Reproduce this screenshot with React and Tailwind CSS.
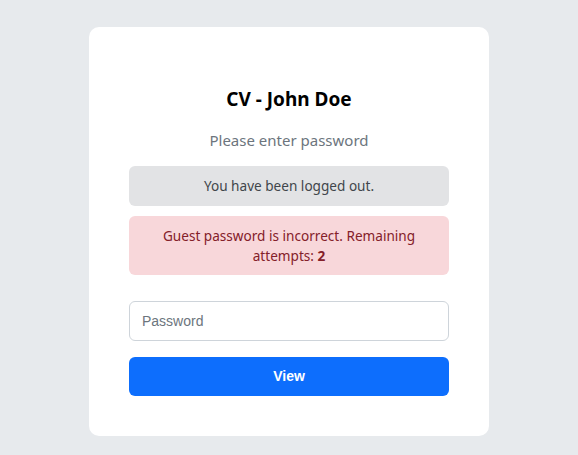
export default function App() {
  return (
    <div className="min-h-[455px] bg-[#e7eaed] pt-[27px] flex justify-center" style={{ fontFamily: '"Noto Sans", "Open Sans", sans-serif' }}>
      <div className="w-[400px] h-[409px] bg-white rounded-[10px] px-10 pt-[58px] pb-10 flex flex-col">
        <h1 className="text-[19px] leading-[28px] font-bold text-black text-center">CV - John Doe</h1>
        <p className="mt-[15px] text-[15px] leading-[24px] text-[#6c757d] text-center">Please enter password</p>
        <div className="mt-[14px] h-[40px] rounded-md bg-[#e2e3e5] text-[#41464b] text-[13.6px] leading-5 flex items-center justify-center">
          You have been logged out.
        </div>
        <div className="mt-[10px] h-[59px] rounded-md bg-[#f8d7da] text-[#842029] text-[13.6px] leading-5 flex items-center justify-center text-center px-4">
          <span>Guest password is incorrect. Remaining attempts: <b>2</b></span>
        </div>
        <input
          type="password"
          placeholder="Password"
          className="mt-[26px] h-[40px] w-full rounded-md border border-[#ced4da] px-3 text-[14px] outline-none placeholder:text-[#6c757d]"
          style={{ fontFamily: '"Liberation Sans", Arial, sans-serif' }}
        />
        <button
          className="mt-[16px] h-[39px] w-full rounded-md bg-[#0d6efd] text-white text-[14px] font-bold"
          style={{ fontFamily: '"Liberation Sans", Arial, sans-serif' }}
        >
          View
        </button>
      </div>
    </div>
  );
}
